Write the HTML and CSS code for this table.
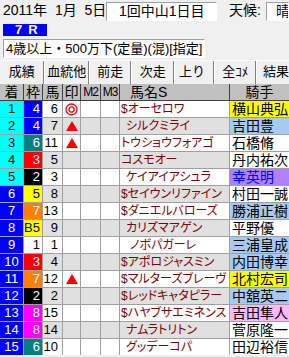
FILE: index.html
```html
<!DOCTYPE html>
<html lang="ja">
<head>
<meta charset="utf-8">
<link rel="stylesheet" href="styles.css">
</head>
<body>
<div class="top">
  <span class="date">2011年  1月  5日</span>
  <span class="field f-meet">1回中山1日目</span>
  <span class="lbl">天候:</span>
  <span class="field f-wx">晴</span>
</div>
<div class="race"><span>7</span><span>R</span></div>
<div class="field cond">4歳以上・500万下(定量)(混)[指定]</div>
<div class="tabs">
  <span class="tab t1">成績</span>
  <span class="tab t2">血統他</span>
  <span class="tab t3">前走</span>
  <span class="tab t4">次走</span>
  <span class="tab t5">上り</span>
  <span class="tab t6">全ｺﾒ</span>
  <span class="tab t7">結果</span>
</div>
<div class="head">
  <span class="h">着</span><span class="h">枠</span><span class="h">馬</span><span class="h">印</span><span class="h hm">M2</span><span class="h hm">M3</span><span class="h hn">馬名S</span><span class="h">騎手</span>
</div>
<div class="rows">
  <div class="row">
    <span class="c chaku top5">1</span><span class="c waku w4">4</span><span class="c g uma">6</span>
    <span class="c g mark"><svg width="13" height="13" viewBox="0 0 13 13"><circle cx="6.5" cy="6.5" r="5.5" fill="none" stroke="#ff0000" stroke-width="1.3"/><circle cx="6.5" cy="6.5" r="2.6" fill="none" stroke="#ff0000" stroke-width="1.3"/></svg></span>
    <span class="c g"></span><span class="c g"></span>
    <span class="c g name">$オーセロワ</span><span class="c jk j-yel">横山典弘</span>
  </div>
  <div class="row alt">
    <span class="c chaku top5">2</span><span class="c waku w4">4</span><span class="c g uma">7</span>
    <span class="c g mark"><svg width="12" height="10" viewBox="0 0 12 10"><polygon points="6,0 12,10 0,10" fill="#ff0000"/></svg></span>
    <span class="c g"></span><span class="c g"></span>
    <span class="c g name sp">シルクミライ</span><span class="c jk j-blu">吉田豊</span>
  </div>
  <div class="row">
    <span class="c chaku top5">3</span><span class="c waku w6">6</span><span class="c g uma">11</span>
    <span class="c g mark"><svg width="12" height="10" viewBox="0 0 12 10"><polygon points="6,0 12,10 0,10" fill="#ff0000"/></svg></span>
    <span class="c g"></span><span class="c g"></span>
    <span class="c g name">トウショウフォアゴ</span><span class="c jk">石橋脩</span>
  </div>
  <div class="row alt">
    <span class="c chaku top5">4</span><span class="c waku w3">3</span><span class="c g uma">5</span>
    <span class="c g mark"></span><span class="c g"></span><span class="c g"></span>
    <span class="c g name">コスモオー</span><span class="c jk">丹内祐次</span>
  </div>
  <div class="row">
    <span class="c chaku top5">5</span><span class="c waku w2">2</span><span class="c g uma">3</span>
    <span class="c g mark"></span><span class="c g"></span><span class="c g"></span>
    <span class="c g name sp">ケイアイアシュラ</span><span class="c jk j-pur">幸英明</span>
  </div>
  <div class="row alt">
    <span class="c chaku">6</span><span class="c waku w5">5</span><span class="c g uma">8</span>
    <span class="c g mark"></span><span class="c g"></span><span class="c g"></span>
    <span class="c g name">$セイウンリファイン</span><span class="c jk">村田一誠</span>
  </div>
  <div class="row">
    <span class="c chaku">7</span><span class="c waku w7">7</span><span class="c g uma">13</span>
    <span class="c g mark"></span><span class="c g"></span><span class="c g"></span>
    <span class="c g name">$ダニエルバローズ</span><span class="c jk j-blu">勝浦正樹</span>
  </div>
  <div class="row alt">
    <span class="c chaku">8</span><span class="c waku w5">B5</span><span class="c g uma">9</span>
    <span class="c g mark"></span><span class="c g"></span><span class="c g"></span>
    <span class="c g name sp">カリズマアゲン</span><span class="c jk">平野優</span>
  </div>
  <div class="row">
    <span class="c chaku">9</span><span class="c waku w1">1</span><span class="c g uma">1</span>
    <span class="c g mark"></span><span class="c g"></span><span class="c g"></span>
    <span class="c g name sp2">ノボパガーレ</span><span class="c jk j-blu">三浦皇成</span>
  </div>
  <div class="row alt">
    <span class="c chaku">10</span><span class="c waku w3">3</span><span class="c g uma">4</span>
    <span class="c g mark"></span><span class="c g"></span><span class="c g"></span>
    <span class="c g name">$アポロジャスミン</span><span class="c jk j-blu">内田博幸</span>
  </div>
  <div class="row">
    <span class="c chaku">11</span><span class="c waku w7">7</span><span class="c g uma">12</span>
    <span class="c g mark"><svg width="12" height="10" viewBox="0 0 12 10"><polygon points="6,0 12,10 0,10" fill="#ff0000"/></svg></span>
    <span class="c g"></span><span class="c g"></span>
    <span class="c g name">$マルターズブレーヴ</span><span class="c jk j-yel">北村宏司</span>
  </div>
  <div class="row alt">
    <span class="c chaku">12</span><span class="c waku w2">2</span><span class="c g uma">2</span>
    <span class="c g mark"></span><span class="c g"></span><span class="c g"></span>
    <span class="c g name">$レッドキャタピラー</span><span class="c jk j-blu">中舘英二</span>
  </div>
  <div class="row">
    <span class="c chaku">13</span><span class="c waku w8">8</span><span class="c g uma">15</span>
    <span class="c g mark"></span><span class="c g"></span><span class="c g"></span>
    <span class="c g name">$ハヤブサエミネンス</span><span class="c jk j-pnk">吉田隼人</span>
  </div>
  <div class="row alt">
    <span class="c chaku">14</span><span class="c waku w8">8</span><span class="c g uma">14</span>
    <span class="c g mark"></span><span class="c g"></span><span class="c g"></span>
    <span class="c g name sp">ナムラトリトン</span><span class="c jk">菅原隆一</span>
  </div>
  <div class="row">
    <span class="c chaku">15</span><span class="c waku w6">6</span><span class="c g uma">10</span>
    <span class="c g mark"></span><span class="c g"></span><span class="c g"></span>
    <span class="c g name sp">グッデーコパ</span><span class="c jk">田辺裕信</span>
  </div>
</div>
</body>
</html>
```

FILE: styles.css
```css
* { box-sizing: border-box; }
html, body { margin: 0; padding: 0; }
body {
  width: 289px;
  height: 357px;
  overflow: hidden;
  background: #f0f0f0;
  color: #000;
  font-family: "Liberation Sans", "Noto Sans CJK JP", sans-serif;
  font-size: 14px;
}
.field {
  display: block;
  background: #fff;
  border: 1px solid;
  border-color: #a0a0a0 #ffffff #ffffff #a0a0a0;
  white-space: nowrap;
  overflow: hidden;
}
.top {
  display: flex;
  align-items: flex-start;
  height: 21px;
  padding-top: 2px;
  line-height: 17px;
}
.date { margin-left: 3px; width: 103px; white-space: pre; }
.f-meet { width: 111px; height: 19px; padding-left: 12px; }
.lbl { margin-left: 12px; width: 37px; }
.f-wx { flex: 1; height: 19px; padding-left: 9px; }
.race {
  display: flex;
  gap: 6px;
  margin: 3px 0 0 3px;
  width: 44px;
  height: 12px;
  padding-left: 12px;
  background: #0000ff;
  color: #fff;
  font-weight: bold;
  font-size: 13px;
  line-height: 12px;
}
.cond {
  margin: 3px 0 0 3px;
  width: 202px;
  height: 19px;
  padding-left: 2px;
  font-size: 13px;
  line-height: 17px;
}
.tabs {
  display: flex;
  margin-top: 2px;
  height: 24px;
  font-size: 13px;
  line-height: 22px;
  border-top: 1px solid #fff;
}
.tab {
  display: flex;
  justify-content: center;
  border-left: 1px solid #fff;
  border-right: 1px solid #808080;
  white-space: nowrap;
}
.t1 { width: 45px; border-left: none; }
.t2 { width: 45px; }
.t3 { width: 43px; }
.t4 { width: 43px; }
.t5 { width: 41px; justify-content: flex-start; padding-left: 4px; }
.t6 { width: 42px; }
.t7 { flex: 1; justify-content: flex-start; padding-left: 6px; border-right: none; }
.head, .row {
  display: grid;
  grid-template-columns: 23px 18px 19px 17px 19px 18px 109px 59px;
  gap: 1px;
}
.head {
  background: #404040;
  height: 17px;
  border-bottom: 1px solid #404040;
}
.h {
  background: #c0c0c0;
  text-align: center;
  line-height: 16px;
  font-size: 14px;
  white-space: nowrap;
  overflow: hidden;
}
.hm { font-size: 12px; letter-spacing: -1px; }
.hn { text-align: left; padding-left: 10px; }
.rows {
  display: flex;
  flex-direction: column;
  gap: 1px;
  background: #a0a0a0;
}
.row { height: 16px; background: #a0a0a0; }
.c {
  line-height: 16px;
  font-size: 13px;
  white-space: nowrap;
  overflow: hidden;
}
.g { background: #ffffff; }
.alt .g { background: #e0e0e0; }
.chaku { background: #0000ff; color: #fff; text-align: center; }
.chaku.top5 { background: #00ffff; color: #000; }
.waku { text-align: right; padding-right: 2px; color: #fff; }
.w1 { background: #ffffff; color: #000; }
.w2 { background: #000000; }
.w3 { background: #ff0000; }
.w4 { background: #0000ff; }
.w5 { background: #ffff00; color: #000; }
.w6 { background: #008080; }
.w7 { background: #ff8000; }
.w8 { background: #ff00ff; }
.uma { text-align: right; padding-right: 4px; }
.mark { display: flex; align-items: center; justify-content: center; }
.name {
  color: #800000;
  font-size: 12px;
  font-feature-settings: "palt";
  padding-left: 1px;
}
.name.sp { padding-left: 6px; }
.name.sp2 { padding-left: 10px; }
.jk { background: #ffffff; font-size: 14px; padding-left: 2px; }
.j-yel { background: #ffff00; }
.j-blu { background: #a6caf0; }
.j-pur { background: #b080ff; color: #0000ff; }
.j-pnk { background: #ffb8ff; }
```
